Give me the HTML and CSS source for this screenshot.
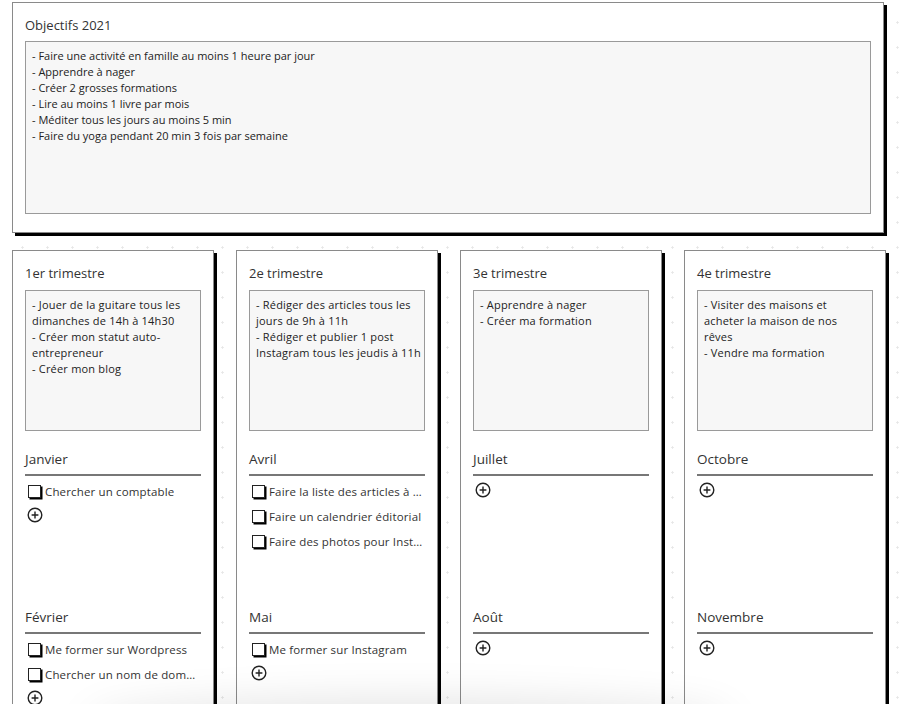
FILE: index.html
```html
<!DOCTYPE html>
<html lang="fr">
<head>
<meta charset="utf-8">
<title>Objectifs 2021</title>
<link rel="stylesheet" href="styles.css">
</head>
<body>
<div class="page">
  <section class="card goals">
    <h2 class="card-title">Objectifs 2021</h2>
    <div class="notes notes-lg">- Faire une activité en famille au moins 1 heure par jour<br>- Apprendre à nager<br>- Créer 2 grosses formations<br>- Lire au moins 1 livre par mois<br>- Méditer tous les jours au moins 5 min<br>- Faire du yoga pendant 20 min 3 fois par semaine</div>
  </section>

  <div class="quarters">
    <section class="card quarter">
      <h2 class="card-title">1er trimestre</h2>
      <div class="notes notes-q">- Jouer de la guitare tous les<br>dimanches de 14h à 14h30<br>- Créer mon statut auto-<br>entrepreneur<br>- Créer mon blog</div>
      <div class="month">
        <h3 class="month-title">Janvier</h3>
        <ul class="tasks">
          <li class="task"><span class="check"></span><span class="task-text">Chercher un comptable</span></li>
        </ul>
        <span class="add"><svg viewBox="0 0 16 16"><circle cx="8" cy="8" r="6.8"/><path d="M8 4.6v6.8M4.6 8h6.8"/></svg></span>
      </div>
      <div class="month">
        <h3 class="month-title">Février</h3>
        <ul class="tasks">
          <li class="task"><span class="check"></span><span class="task-text">Me former sur Wordpress</span></li>
          <li class="task"><span class="check"></span><span class="task-text">Chercher un nom de domaine</span></li>
        </ul>
        <span class="add"><svg viewBox="0 0 16 16"><circle cx="8" cy="8" r="6.8"/><path d="M8 4.6v6.8M4.6 8h6.8"/></svg></span>
      </div>
      <div class="month">
        <h3 class="month-title">Mars</h3>
        <ul class="tasks"></ul>
        <span class="add"><svg viewBox="0 0 16 16"><circle cx="8" cy="8" r="6.8"/><path d="M8 4.6v6.8M4.6 8h6.8"/></svg></span>
      </div>
    </section>

    <section class="card quarter">
      <h2 class="card-title">2e trimestre</h2>
      <div class="notes notes-q">- Rédiger des articles tous les<br>jours de 9h à 11h<br>- Rédiger et publier 1 post<br>Instagram tous les jeudis à 11h</div>
      <div class="month">
        <h3 class="month-title">Avril</h3>
        <ul class="tasks">
          <li class="task"><span class="check"></span><span class="task-text">Faire la liste des articles à rédiger</span></li>
          <li class="task"><span class="check"></span><span class="task-text">Faire un calendrier éditorial</span></li>
          <li class="task"><span class="check"></span><span class="task-text">Faire des photos pour Instagram</span></li>
        </ul>
      </div>
      <div class="month">
        <h3 class="month-title">Mai</h3>
        <ul class="tasks">
          <li class="task"><span class="check"></span><span class="task-text">Me former sur Instagram</span></li>
        </ul>
        <span class="add"><svg viewBox="0 0 16 16"><circle cx="8" cy="8" r="6.8"/><path d="M8 4.6v6.8M4.6 8h6.8"/></svg></span>
      </div>
      <div class="month">
        <h3 class="month-title">Juin</h3>
        <ul class="tasks"></ul>
        <span class="add"><svg viewBox="0 0 16 16"><circle cx="8" cy="8" r="6.8"/><path d="M8 4.6v6.8M4.6 8h6.8"/></svg></span>
      </div>
    </section>

    <section class="card quarter">
      <h2 class="card-title">3e trimestre</h2>
      <div class="notes notes-q">- Apprendre à nager<br>- Créer ma formation</div>
      <div class="month">
        <h3 class="month-title">Juillet</h3>
        <ul class="tasks"></ul>
        <span class="add"><svg viewBox="0 0 16 16"><circle cx="8" cy="8" r="6.8"/><path d="M8 4.6v6.8M4.6 8h6.8"/></svg></span>
      </div>
      <div class="month">
        <h3 class="month-title">Août</h3>
        <ul class="tasks"></ul>
        <span class="add"><svg viewBox="0 0 16 16"><circle cx="8" cy="8" r="6.8"/><path d="M8 4.6v6.8M4.6 8h6.8"/></svg></span>
      </div>
      <div class="month">
        <h3 class="month-title">Septembre</h3>
        <ul class="tasks"></ul>
        <span class="add"><svg viewBox="0 0 16 16"><circle cx="8" cy="8" r="6.8"/><path d="M8 4.6v6.8M4.6 8h6.8"/></svg></span>
      </div>
    </section>

    <section class="card quarter">
      <h2 class="card-title">4e trimestre</h2>
      <div class="notes notes-q">- Visiter des maisons et<br>acheter la maison de nos<br>rêves<br>- Vendre ma formation</div>
      <div class="month">
        <h3 class="month-title">Octobre</h3>
        <ul class="tasks"></ul>
        <span class="add"><svg viewBox="0 0 16 16"><circle cx="8" cy="8" r="6.8"/><path d="M8 4.6v6.8M4.6 8h6.8"/></svg></span>
      </div>
      <div class="month">
        <h3 class="month-title">Novembre</h3>
        <ul class="tasks"></ul>
        <span class="add"><svg viewBox="0 0 16 16"><circle cx="8" cy="8" r="6.8"/><path d="M8 4.6v6.8M4.6 8h6.8"/></svg></span>
      </div>
      <div class="month">
        <h3 class="month-title">Décembre</h3>
        <ul class="tasks"></ul>
        <span class="add"><svg viewBox="0 0 16 16"><circle cx="8" cy="8" r="6.8"/><path d="M8 4.6v6.8M4.6 8h6.8"/></svg></span>
      </div>
    </section>
  </div>
</div>
<div class="fade"></div>
</body>
</html>
```

FILE: styles.css
```css
html, body {
  margin: 0;
  padding: 0;
}

body {
  font-family: "Open Sans", "Noto Sans", "DejaVu Sans", sans-serif;
  color: #222;
  background-color: #fff;
  background-image: radial-gradient(circle, #e6e6e6 0.9px, transparent 1.4px);
  background-size: 25px 25px;
  background-position: 10px 10px;
}

.page {
  padding: 2px 16px 0 12px;
}

.card {
  background: #fff;
  border: 1px solid #8a8a8a;
  box-shadow: 3px 3px 0 #000;
  padding: 12px 12px 18px;
  box-sizing: border-box;
}

.card-title {
  margin: 0 0 6px;
  font-size: 13px;
  font-weight: 400;
  line-height: 20px;
  color: #333;
}

.notes {
  background: #f7f7f7;
  border: 1px solid #9a9a9a;
  padding: 6px;
  font-size: 11px;
  line-height: 16px;
  color: #222;
  box-sizing: border-box;
}

.notes-lg {
  height: 173px;
}

.quarters {
  margin-top: 17px;
  display: grid;
  grid-template-columns: repeat(4, 202px);
  column-gap: 22px;
}

.quarter .card-title {
  margin-bottom: 7px;
}

.notes-q {
  height: 141px;
  letter-spacing: 0.2px;
  white-space: nowrap;
}

.month {
  height: 158px;
}

.notes-q + .month {
  margin-top: 18px;
}

.month-title {
  margin: 0;
  padding-bottom: 5px;
  border-bottom: 2px solid #777;
  font-size: 13.5px;
  font-weight: 400;
  line-height: 20px;
  color: #333;
}

.tasks {
  list-style: none;
  margin: 0;
  padding: 3px 0 0;
}

.task {
  display: flex;
  align-items: center;
  height: 25px;
  padding-left: 3px;
  font-size: 11.5px;
  letter-spacing: 0.15px;
  color: #333;
  min-width: 0;
}

.check {
  flex: none;
  width: 11px;
  height: 11px;
  border: 1px solid #222;
  background: #fff;
  box-shadow: 1.5px 1.5px 0 #000;
  margin-right: 4px;
}

.task-text {
  white-space: nowrap;
  overflow: hidden;
  text-overflow: ellipsis;
  min-width: 0;
}

.add {
  display: block;
  width: 16px;
  height: 16px;
  margin: 3px 0 0 2px;
}

.add svg {
  display: block;
  width: 16px;
  height: 16px;
  fill: none;
  stroke: #222;
  stroke-width: 1.4;
}

.fade {
  position: fixed;
  left: 90px;
  width: 640px;
  bottom: -40px;
  height: 40px;
  border-radius: 50%;
  box-shadow: 0 0 40px 6px rgba(0, 0, 0, 0.1);
  pointer-events: none;
}
```
